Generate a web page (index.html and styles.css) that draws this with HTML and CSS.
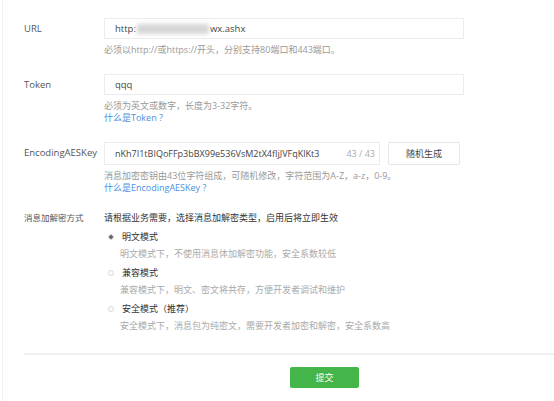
FILE: index.html
```html
<!DOCTYPE html>
<html lang="zh-CN">
<head>
<meta charset="utf-8">
<title>服务器配置</title>
<link rel="stylesheet" href="styles.css">
</head>
<body>
<div class="page">
  <div class="form">
    <div class="row">
      <div class="label">URL</div>
      <div class="field">
        <div class="input wide"><span>http:</span><span class="blur"></span><span>wx.ashx</span></div>
        <div class="hint">必须以http://或https://开头，分别支持80端口和443端口。</div>
      </div>
    </div>
    <div class="row">
      <div class="label">Token</div>
      <div class="field">
        <div class="input wide"><span>qqq</span></div>
        <div class="hint">必须为英文或数字，长度为3-32字符。</div>
        <div class="link">什么是Token ?</div>
      </div>
    </div>
    <div class="row">
      <div class="label">EncodingAESKey</div>
      <div class="field">
        <div class="inline">
          <div class="input key"><span class="keytext">nKh7I1tBIQoFFp3bBX99e536VsM2tX4fIjJVFqKlKt3</span><span class="count">43 / 43</span></div>
          <div class="btn">随机生成</div>
        </div>
        <div class="hint">消息加密密钥由43位字符组成，可随机修改，字符范围为A-Z，a-z，0-9。</div>
        <div class="link">什么是EncodingAESKey ?</div>
      </div>
    </div>
    <div class="row mode">
      <div class="label">消息加解密方式</div>
      <div class="field">
        <div class="intro">请根据业务需要，选择消息加解密类型，启用后将立即生效</div>
        <div class="option">
          <div class="otitle"><span class="radio checked"></span>明文模式</div>
          <div class="odesc">明文模式下，不使用消息体加解密功能，安全系数较低</div>
        </div>
        <div class="option">
          <div class="otitle"><span class="radio"></span>兼容模式</div>
          <div class="odesc">兼容模式下，明文、密文将共存，方便开发者调试和维护</div>
        </div>
        <div class="option">
          <div class="otitle"><span class="radio"></span>安全模式（推荐）</div>
          <div class="odesc">安全模式下，消息包为纯密文，需要开发者加密和解密，安全系数高</div>
        </div>
      </div>
    </div>
  </div>
  <div class="footer">
    <div class="submit">提交</div>
  </div>
</div>
</body>
</html>
```
FILE: styles.css
```css
html, body {
  margin: 0;
  padding: 0;
  background: #fff;
}
body {
  font-family: "Open Sans", "Noto Sans CJK SC", sans-serif;
  font-size: 9px;
  color: #444;
  width: 554px;
  height: 401px;
  overflow: hidden;
}
.page {
  margin-left: 2px;
  border-left: 1px solid #f2f2f2;
  padding-left: 21px;
  height: 401px;
  box-sizing: border-box;
}
.form {
  padding-top: 18px;
}
.row {
  display: flex;
  margin-bottom: 18px;
}
.label {
  width: 80px;
  flex: none;
  line-height: 21px;
  color: #555;
  font-size: 9.5px;
}
.field {
  flex: none;
}
.input {
  height: 21px;
  border: 1px solid #ececec;
  box-sizing: border-box;
  padding-left: 10px;
  display: flex;
  align-items: center;
  color: #444;
  font-size: 9.5px;
}
.input.wide {
  width: 360px;
}
.blur {
  display: inline-block;
  width: 72px;
  height: 10px;
  background: #d6d6d6;
  filter: blur(2px);
  margin: 0 1px;
}
.inline {
  display: flex;
  gap: 8px;
}
.input.key {
  width: 276px;
  height: 23px;
  justify-content: space-between;
  padding-right: 4px;
  font-size: 9px;
}
.count {
  color: #aaa;
  font-size: 9px;
}
.btn {
  width: 72px;
  height: 23px;
  border: 1px solid #e6e6e6;
  border-radius: 2px;
  box-sizing: border-box;
  display: flex;
  align-items: center;
  justify-content: center;
  color: #444;
}
.hint {
  margin-top: 5px;
  line-height: 12px;
  color: #999;
}
.link {
  line-height: 12px;
  color: #4a90e2;
}
.mode {
  margin-top: 4px;
}
.mode .label {
  line-height: 12px;
  font-size: 8.5px;
}
.intro {
  line-height: 12px;
  color: #333;
}
.option {
  margin-top: 7px;
}
.otitle {
  display: flex;
  align-items: center;
  line-height: 12px;
  color: #333;
}
.radio {
  width: 6px;
  height: 6px;
  border: 1px solid #d8d8d8;
  border-radius: 50%;
  box-sizing: border-box;
  margin: 0 8px 0 4px;
}
.radio.checked {
  border-color: #d0d0d0;
  background: radial-gradient(circle, #666 0 1.6px, #fff 2px);
}
.odesc {
  margin-top: 5px;
  margin-left: 16px;
  line-height: 12px;
  color: #aaa;
}
.footer {
  margin-top: 21px;
  border-top: 2px solid #f1f1f1;
  padding-top: 12px;
}
.submit {
  margin-left: 266px;
  width: 69px;
  height: 21px;
  background: #44b549;
  border-radius: 2px;
  color: #fff;
  display: flex;
  align-items: center;
  justify-content: center;
}
```
